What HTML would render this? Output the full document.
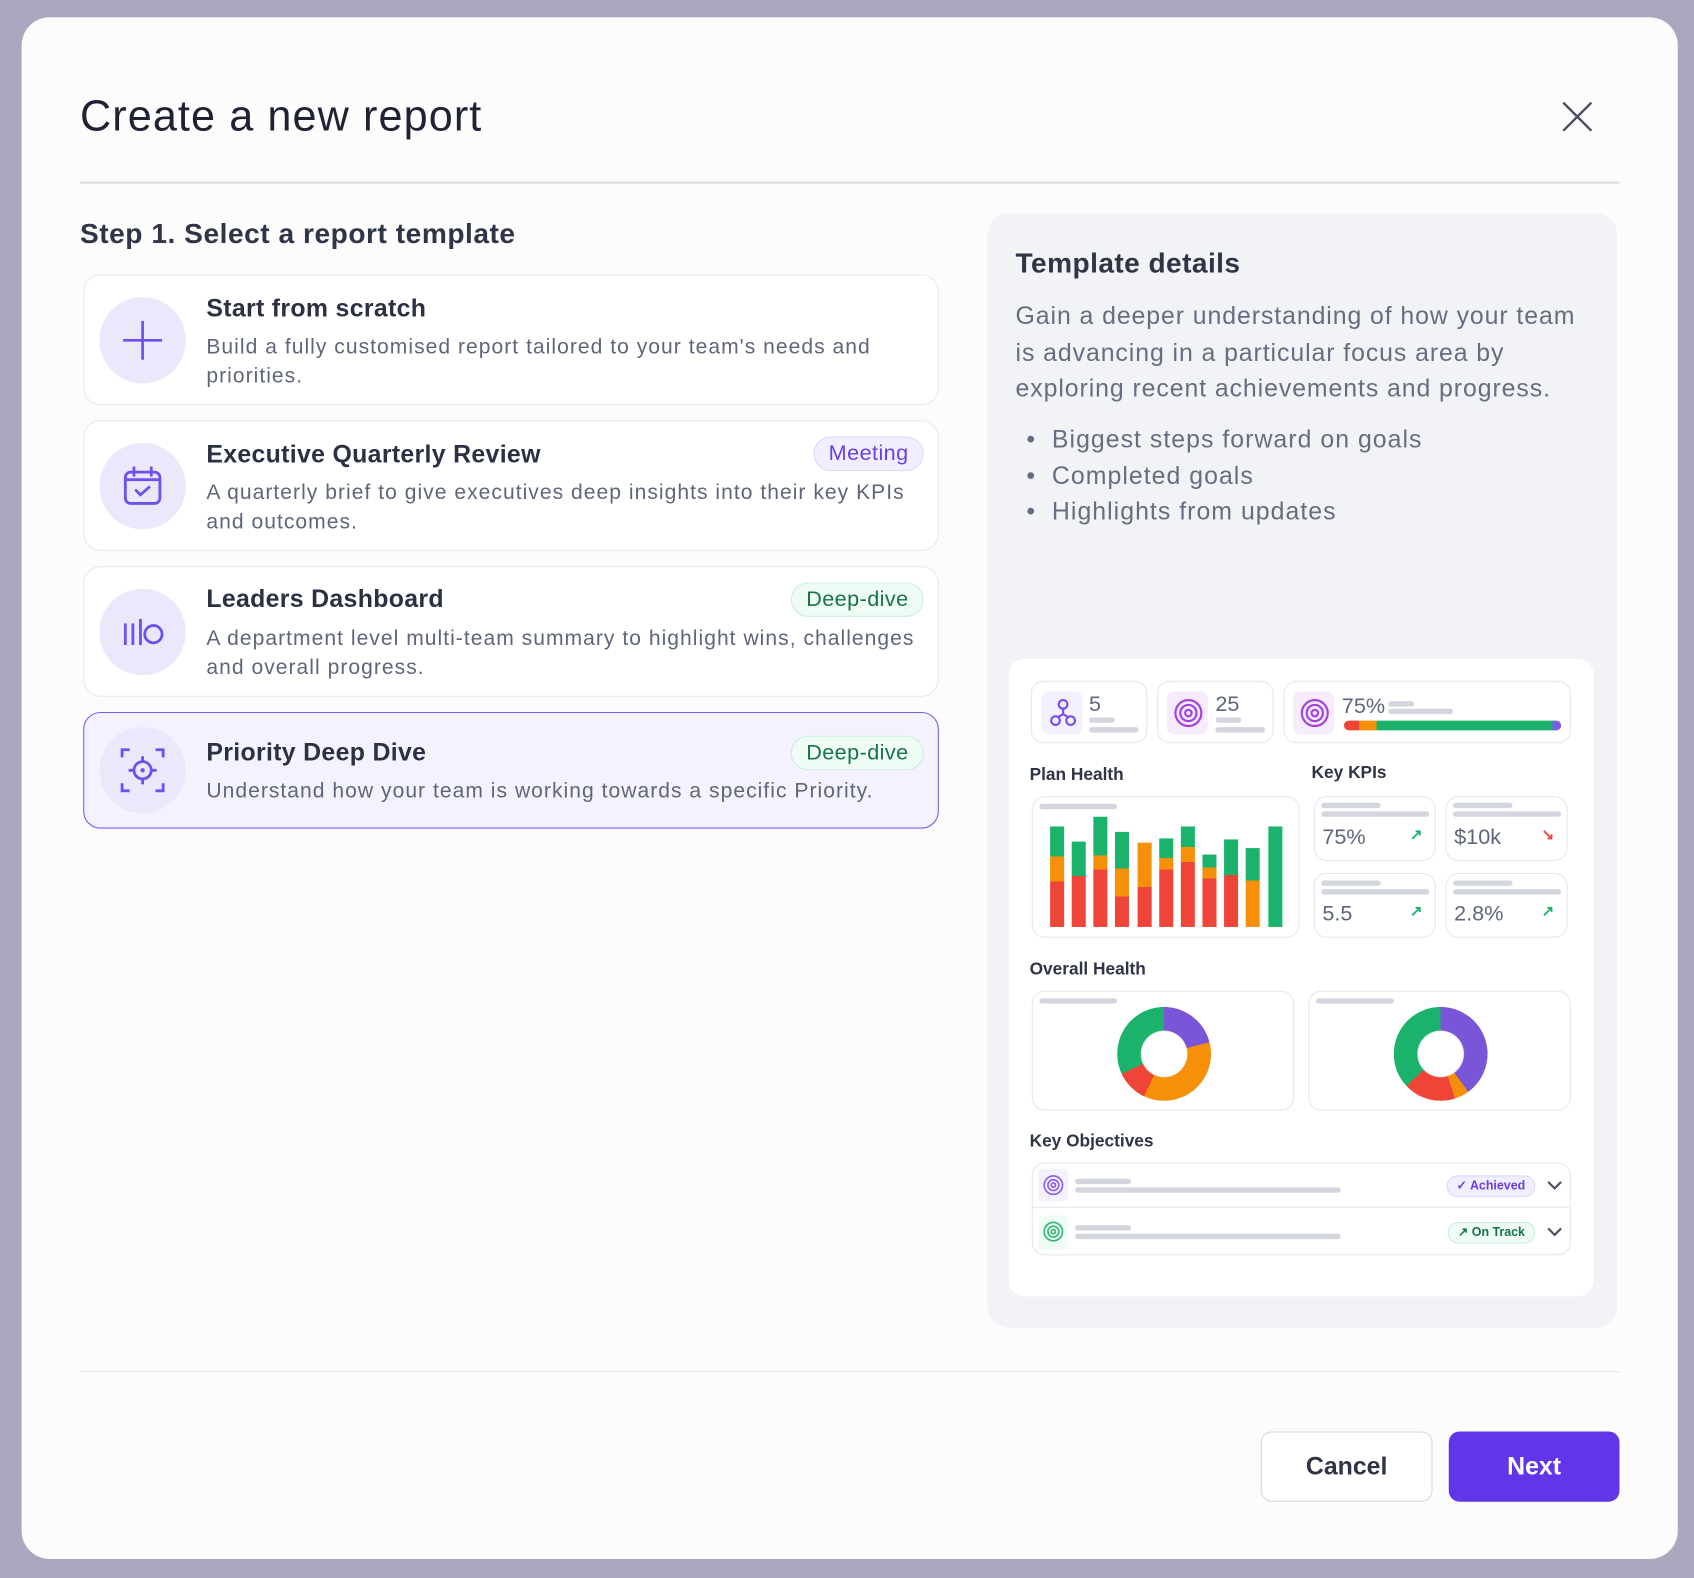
<!DOCTYPE html>
<html><head><meta charset="utf-8"><style>
*{box-sizing:border-box;margin:0;padding:0}
html,body{width:1694px;height:1578px;overflow:hidden;background:#a9a6bd;font-family:"Liberation Sans",sans-serif}
#s{position:absolute;left:0;top:0;width:1568px;height:1461px;transform:scale(1.08036);transform-origin:0 0}
.a{position:absolute}
.modal{left:20px;top:16px;width:1533px;height:1427px;background:#fcfcfd;border-radius:26px}
.card{left:77px;width:792px;background:#fff;border:1px solid #e8e9ee;border-radius:16px}
.ic{left:14px;width:80px;height:80px;border-radius:50%;background:#ebe8fc;display:flex;align-items:center;justify-content:center}
.ct{left:113px;font-size:23px;font-weight:bold;color:#2b3043;letter-spacing:0.3px}
.cd{left:113px;font-size:19.5px;color:#5f667a;line-height:27px;width:665px;letter-spacing:0.95px}
.tag{right:13px;height:32px;border-radius:16px;padding:0 13px;font-size:20px;line-height:30px;letter-spacing:0.4px}
.tm{background:#f1efff;border:1px solid #ddd6fd;color:#6a3ee6}
.td{background:#effbf5;border:1px solid #c9efdb;color:#17744a}
.bx{background:#fff;border:1.5px solid #e6e7ec;border-radius:12px}
.ln{background:#d3d6de;height:5px;border-radius:3px}
.lbl{font-size:16px;font-weight:bold;color:#2f3447}
.bar{position:absolute;width:13px;bottom:0}
.kv{font-size:20px;color:#5f667a}
.donut{border-radius:50%;-webkit-mask:radial-gradient(circle,transparent 21px,#000 22px);mask:radial-gradient(circle,transparent 21px,#000 22px)}
</style></head><body><div id="s">
<div class="a modal"></div>
<div class="a" style="left:74px;top:86px;font-size:40px;color:#1f2233;letter-spacing:1px">Create a new report</div>
<svg class="a" style="left:1446px;top:94px" width="28" height="28" viewBox="0 0 28 28"><path d="M1 1L27 27M27 1L1 27" stroke="#4a4f60" stroke-width="2.2"/></svg>
<div class="a" style="left:74px;top:168px;width:1425px;height:2px;background:#dcdde3"></div>
<div class="a" style="left:74px;top:201px;font-size:26px;font-weight:bold;color:#2f3447;letter-spacing:0.5px">Step 1. Select a report template</div>

<div class="a card" style="top:254px;height:121px">
<div class="a ic" style="top:20px"><svg width="40" height="40"><path d="M20 2V38M2 20H38" stroke="#6f4ff0" stroke-width="2.5"/></svg></div>
<div class="a ct" style="top:17px">Start from scratch</div>
<div class="a cd" style="top:53px">Build a fully customised report tailored to your team's needs and priorities.</div>
</div>
<div class="a card" style="top:389px;height:121px">
<div class="a ic" style="top:20px"><svg width="36" height="38" viewBox="0 0 36 38"><rect x="2" y="6" width="32" height="29" rx="5" fill="none" stroke="#6f4ff0" stroke-width="2.6"/><path d="M2 13H34M10 2V9M26 2V9M12 23l4 4 8-7" fill="none" stroke="#6f4ff0" stroke-width="2.6" stroke-linecap="round"/></svg></div>
<div class="a ct" style="top:17px">Executive Quarterly Review</div>
<div class="a tag tm" style="top:14px">Meeting</div>
<div class="a cd" style="top:53px">A quarterly brief to give executives deep insights into their key KPIs and outcomes.</div>
</div>
<div class="a card" style="top:524px;height:121px">
<div class="a ic" style="top:20px"><svg width="40" height="28" viewBox="0 0 40 28"><path d="M4 6V26M11 6V26M18 2V26" stroke="#6f4ff0" stroke-width="2.6"/><circle cx="30" cy="16" r="8" fill="none" stroke="#6f4ff0" stroke-width="2.6"/></svg></div>
<div class="a ct" style="top:16px">Leaders Dashboard</div>
<div class="a tag td" style="top:14px">Deep-dive</div>
<div class="a cd" style="top:53px">A department level multi-team summary to highlight wins, challenges and overall progress.</div>
</div>
<div class="a card" style="top:659px;height:108px;background:#f4f2ff;border:1.5px solid #7b5ce6">
<div class="a ic" style="top:13px"><svg width="44" height="44" viewBox="0 0 44 44"><path d="M3 10V3H10M34 3H41V10M41 34V41H34M10 41H3V34" fill="none" stroke="#6f4ff0" stroke-width="2.6"/><circle cx="22" cy="22" r="8" fill="none" stroke="#6f4ff0" stroke-width="2.6"/><circle cx="22" cy="22" r="2" fill="#6f4ff0"/><path d="M22 9V14M22 30V35M9 22H14M30 22H35" stroke="#6f4ff0" stroke-width="2.6"/></svg></div>
<div class="a ct" style="top:23px">Priority Deep Dive</div>
<div class="a tag td" style="top:21px">Deep-dive</div>
<div class="a cd" style="top:59px">Understand how your team is working towards a specific Priority.</div>
</div>

<div class="a" style="left:914px;top:197px;width:583px;height:1032px;background:#f2f3f7;border-radius:20px"></div>
<div class="a" style="left:940px;top:228px;font-size:26px;font-weight:bold;color:#2f3447;letter-spacing:0.4px">Template details</div>
<div class="a" style="left:940px;top:276px;width:540px;font-size:23px;line-height:33.5px;color:#676d80;letter-spacing:0.85px">Gain a deeper understanding of how your team is advancing in a particular focus area by exploring recent achievements and progress.</div>
<div class="a" style="left:950px;top:390px;font-size:23px;line-height:33.5px;color:#676d80;letter-spacing:0.95px">•&nbsp;&nbsp;Biggest steps forward on goals<br>•&nbsp;&nbsp;Completed goals<br>•&nbsp;&nbsp;Highlights from updates</div>

<div class="a" style="left:934px;top:610px;width:541px;height:590px;background:#fff;border-radius:14px"></div>
<div class="a bx" style="left:954px;top:630px;width:108px;height:58px"></div>
<div class="a" style="left:964px;top:640px;width:38px;height:40px;background:#f3f1ff;border-radius:7px"></div>
<svg class="a" style="left:971px;top:646px" width="26" height="28" viewBox="0 0 26 28"><circle cx="13" cy="6" r="4" fill="none" stroke="#7a4fe8" stroke-width="2"/><circle cx="6" cy="21" r="4" fill="none" stroke="#7a4fe8" stroke-width="2"/><circle cx="20" cy="21" r="4" fill="none" stroke="#7a4fe8" stroke-width="2"/><path d="M13 10V15L8 18M13 15L18 18" fill="none" stroke="#7a4fe8" stroke-width="2"/></svg>
<div class="a kv" style="left:1008px;top:641px">5</div>
<div class="a ln" style="left:1008px;top:664px;width:24px"></div><div class="a ln" style="left:1008px;top:673px;width:46px"></div>
<div class="a bx" style="left:1071px;top:630px;width:108px;height:58px"></div>
<div class="a" style="left:1080px;top:640px;width:38px;height:40px;background:#f6ecfd;border-radius:7px"></div>
<svg class="a" style="left:1086px;top:646px" width="28" height="28"><circle cx="14" cy="14" r="12" fill="none" stroke="#a43fe0" stroke-width="2"/><circle cx="14" cy="14" r="7.5" fill="none" stroke="#a43fe0" stroke-width="2"/><circle cx="14" cy="14" r="3" fill="none" stroke="#a43fe0" stroke-width="2"/></svg>
<div class="a kv" style="left:1125px;top:641px">25</div>
<div class="a ln" style="left:1125px;top:664px;width:24px"></div><div class="a ln" style="left:1125px;top:673px;width:46px"></div>
<div class="a bx" style="left:1188px;top:630px;width:266px;height:58px"></div>
<div class="a" style="left:1197px;top:640px;width:38px;height:40px;background:#f6ecfd;border-radius:7px"></div>
<svg class="a" style="left:1203px;top:646px" width="28" height="28"><circle cx="14" cy="14" r="12" fill="none" stroke="#a43fe0" stroke-width="2"/><circle cx="14" cy="14" r="7.5" fill="none" stroke="#a43fe0" stroke-width="2"/><circle cx="14" cy="14" r="3" fill="none" stroke="#a43fe0" stroke-width="2"/></svg>
<div class="a kv" style="left:1242px;top:643px">75%</div>
<div class="a ln" style="left:1285px;top:649px;width:24px"></div><div class="a ln" style="left:1285px;top:656px;width:60px"></div>
<div class="a" style="left:1244px;top:667px;width:201px;height:9px;border-radius:5px;background:linear-gradient(90deg,#ef4538 0 7%,#f79009 7% 15%,#1bb36b 15% 96%,#7b5ce6 96%)"></div>

<div class="a lbl" style="left:953px;top:709px">Plan Health</div>
<div class="a lbl" style="left:1214px;top:707px">Key KPIs</div>
<div class="a bx" style="left:955px;top:737px;width:248px;height:131px"></div>
<div class="a ln" style="left:962px;top:744px;width:72px"></div>
<div class="a" style="left:972px;top:740px;width:220px;height:118px">
<div class="bar" style="left:0;height:93px;background:linear-gradient(#1bb36b 0 28px,#f79009 28px 51px,#ef4538 51px)"></div>
<div class="bar" style="left:20px;height:79px;background:linear-gradient(#1bb36b 0 32px,#ef4538 32px)"></div>
<div class="bar" style="left:40px;height:102px;background:linear-gradient(#1bb36b 0 36px,#f79009 36px 49px,#ef4538 49px)"></div>
<div class="bar" style="left:60px;height:88px;background:linear-gradient(#1bb36b 0 34px,#f79009 34px 60px,#ef4538 60px)"></div>
<div class="bar" style="left:81px;height:78px;background:linear-gradient(#f79009 0 41px,#ef4538 41px)"></div>
<div class="bar" style="left:101px;height:82px;background:linear-gradient(#1bb36b 0 18px,#f79009 18px 29px,#ef4538 29px)"></div>
<div class="bar" style="left:121px;height:93px;background:linear-gradient(#1bb36b 0 19px,#f79009 19px 33px,#ef4538 33px)"></div>
<div class="bar" style="left:141px;height:67px;background:linear-gradient(#1bb36b 0 12px,#f79009 12px 22px,#ef4538 22px)"></div>
<div class="bar" style="left:161px;height:81px;background:linear-gradient(#1bb36b 0 33px,#ef4538 33px)"></div>
<div class="bar" style="left:181px;height:73px;background:linear-gradient(#1bb36b 0 30px,#f79009 30px)"></div>
<div class="bar" style="left:202px;height:93px;background:#1bb36b"></div>
</div>

<div class="a bx" style="left:1216px;top:737px;width:113px;height:60px"></div>
<div class="a ln" style="left:1223px;top:743px;width:55px"></div><div class="a ln" style="left:1223px;top:751px;width:100px"></div>
<div class="a kv" style="left:1224px;top:764px">75%</div><div class="a" style="left:1305px;top:764px;color:#1bb36b;font-size:14px;font-weight:bold">↗</div>
<div class="a bx" style="left:1338px;top:737px;width:113px;height:60px"></div>
<div class="a ln" style="left:1345px;top:743px;width:55px"></div><div class="a ln" style="left:1345px;top:751px;width:100px"></div>
<div class="a kv" style="left:1346px;top:764px">$10k</div><div class="a" style="left:1427px;top:764px;color:#ef4538;font-size:14px;font-weight:bold">↘</div>
<div class="a bx" style="left:1216px;top:808px;width:113px;height:60px"></div>
<div class="a ln" style="left:1223px;top:815px;width:55px"></div><div class="a ln" style="left:1223px;top:823px;width:100px"></div>
<div class="a kv" style="left:1224px;top:835px">5.5</div><div class="a" style="left:1305px;top:835px;color:#1bb36b;font-size:14px;font-weight:bold">↗</div>
<div class="a bx" style="left:1338px;top:808px;width:113px;height:60px"></div>
<div class="a ln" style="left:1345px;top:815px;width:55px"></div><div class="a ln" style="left:1345px;top:823px;width:100px"></div>
<div class="a kv" style="left:1346px;top:835px">2.8%</div><div class="a" style="left:1427px;top:835px;color:#1bb36b;font-size:14px;font-weight:bold">↗</div>

<div class="a lbl" style="left:953px;top:889px">Overall Health</div>
<div class="a bx" style="left:955px;top:917px;width:243px;height:111px"></div>
<div class="a ln" style="left:962px;top:924px;width:72px"></div>
<div class="a donut" style="left:1034px;top:932px;width:87px;height:87px;background:conic-gradient(#7b55d8 0 21%,#f79009 21% 57%,#ef4538 57% 68%,#1bb36b 68%)"></div>
<div class="a bx" style="left:1211px;top:917px;width:243px;height:111px"></div>
<div class="a ln" style="left:1218px;top:924px;width:72px"></div>
<div class="a donut" style="left:1290px;top:932px;width:87px;height:87px;background:conic-gradient(#7b55d8 0 40%,#f79009 40% 45%,#ef4538 45% 63%,#1bb36b 63%)"></div>

<div class="a lbl" style="left:953px;top:1048px">Key Objectives</div>
<div class="a bx" style="left:955px;top:1076px;width:499px;height:86px"></div>
<div class="a" style="left:956px;top:1117px;width:497px;height:1px;background:#e6e7ec"></div>
<div class="a" style="left:961px;top:1082px;width:28px;height:30px;background:#f3f1ff;border-radius:5px"></div>
<svg class="a" style="left:965px;top:1087px" width="20" height="20"><circle cx="10" cy="10" r="8.5" fill="none" stroke="#8a5cf0" stroke-width="1.5"/><circle cx="10" cy="10" r="5" fill="none" stroke="#8a5cf0" stroke-width="1.5"/><circle cx="10" cy="10" r="2" fill="none" stroke="#8a5cf0" stroke-width="1.5"/></svg>
<div class="a ln" style="left:995px;top:1091px;width:52px"></div><div class="a ln" style="left:995px;top:1099px;width:246px"></div>
<div class="a" style="left:1339px;top:1088px;width:82px;height:20px;border-radius:10px;background:#f1efff;border:1px solid #ddd6fd;color:#6a3ee6;font-size:11.5px;font-weight:bold;line-height:18px;text-align:center">✓ Achieved</div>
<svg class="a" style="left:1432px;top:1092px" width="14" height="10"><path d="M1 2l6 6 6-6" fill="none" stroke="#4a4f60" stroke-width="2"/></svg>
<div class="a" style="left:961px;top:1125px;width:28px;height:32px;background:#effbf5;border-radius:5px"></div>
<svg class="a" style="left:965px;top:1130px" width="20" height="20"><circle cx="10" cy="10" r="8.5" fill="none" stroke="#2fb673" stroke-width="1.5"/><circle cx="10" cy="10" r="5" fill="none" stroke="#2fb673" stroke-width="1.5"/><circle cx="10" cy="10" r="2" fill="none" stroke="#2fb673" stroke-width="1.5"/></svg>
<div class="a ln" style="left:995px;top:1134px;width:52px"></div><div class="a ln" style="left:995px;top:1142px;width:246px"></div>
<div class="a" style="left:1340px;top:1131px;width:81px;height:20px;border-radius:10px;background:#effbf5;border:1px solid #c9efdb;color:#17744a;font-size:11.5px;font-weight:bold;line-height:18px;text-align:center">↗ On Track</div>
<svg class="a" style="left:1432px;top:1135px" width="14" height="10"><path d="M1 2l6 6 6-6" fill="none" stroke="#4a4f60" stroke-width="2"/></svg>

<div class="a" style="left:74px;top:1269px;width:1425px;height:1px;background:#e3e4e9"></div>
<div class="a" style="left:1167px;top:1325px;width:159px;height:65px;border:1.5px solid #d5d7de;border-radius:10px;background:#fff;font-size:23px;font-weight:bold;color:#2f3447;text-align:center;line-height:62px">Cancel</div>
<div class="a" style="left:1341px;top:1325px;width:158px;height:65px;border-radius:10px;background:#6236e8;font-size:23px;font-weight:bold;color:#fff;text-align:center;line-height:65px">Next</div>
</div></body></html>
